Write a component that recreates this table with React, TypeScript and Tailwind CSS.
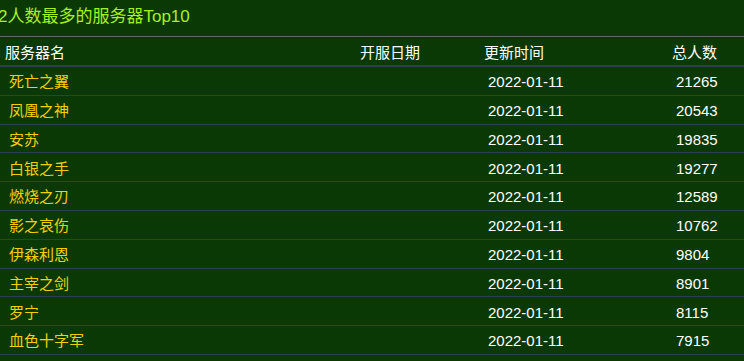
import React from "react";

const rows: [string, string, string][] = [
  ["死亡之翼", "2022-01-11", "21265"],
  ["凤凰之神", "2022-01-11", "20543"],
  ["安苏", "2022-01-11", "19835"],
  ["白银之手", "2022-01-11", "19277"],
  ["燃烧之刃", "2022-01-11", "12589"],
  ["影之哀伤", "2022-01-11", "10762"],
  ["伊森利恩", "2022-01-11", "9804"],
  ["主宰之剑", "2022-01-11", "8901"],
  ["罗宁", "2022-01-11", "8115"],
  ["血色十字军", "2022-01-11", "7915"],
];

export default function App() {
  return (
    <div
      className="w-[744px] h-[361px] overflow-hidden bg-[#0b3905] text-[15px]"
      style={{ fontFamily: '"Liberation Sans", "Noto Sans CJK SC", sans-serif' }}
    >
      <div className="h-[37px] border-b border-[#5b6b5b] flex overflow-hidden">
        <div className="ml-[-2px] text-[17px] leading-[33px] text-[#a8f020] whitespace-nowrap">
          2人数最多的服务器Top10
        </div>
      </div>
      <div className="flex h-[30px] items-center pt-[4px] border-b-2 border-[#2e3d52] text-white">
        <div className="w-[355px] pl-[5px]">服务器名</div>
        <div className="w-[124px] pl-[5px]">开服日期</div>
        <div className="w-[188px] pl-[5px]">更新时间</div>
        <div className="flex-1 pl-[5px]">总人数</div>
      </div>
      {rows.map(([name, date, n]) => (
        <div
          key={name}
          className="flex h-[28.8px] items-center pt-[3px] border-b border-[#2e3d52]"
        >
          <div className="w-[355px] pl-[9px] text-[#f5d000]">{name}</div>
          <div className="w-[124px] pl-[9px] text-white"></div>
          <div className="w-[188px] pl-[9px] text-white">{date}</div>
          <div className="flex-1 pl-[9px] text-white">{n}</div>
        </div>
      ))}
    </div>
  );
}
